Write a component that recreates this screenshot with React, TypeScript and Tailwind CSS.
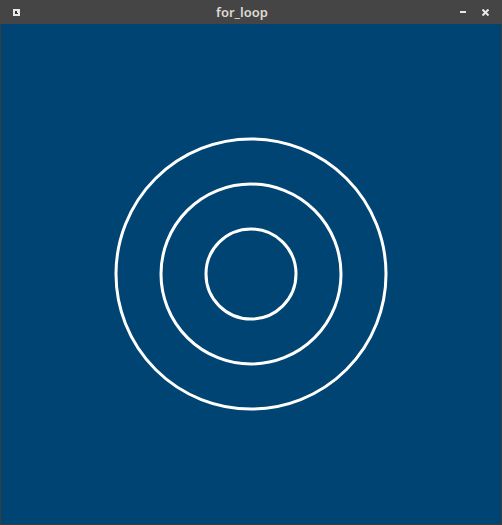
export default function App() {
  return (
    <div className="w-[502px] h-[525px] bg-[#3c3c3c] flex flex-col">
      <div className="h-[24px] bg-[#454545] flex items-center px-[13px] relative">
        <div className="w-[7px] h-[7px] bg-[#e8e8e8] relative">
          <div className="absolute left-[2px] top-[2px] w-[2px] h-[3px] bg-[#333]" />
          <div className="absolute left-[2px] top-[4px] w-[3px] h-[1px] bg-[#333]" />
        </div>
        <div className="flex-1 text-center text-[#dfdbd2] text-[13px] font-semibold font-['Noto_Sans',sans-serif] pl-[4px] leading-none">
          for_loop
        </div>
        <div className="flex items-center gap-[16px]">
          <div className="w-[6px] h-[2px] bg-[#e8e8e8]" />
          <svg width="7" height="7" viewBox="0 0 7 7">
            <path d="M0.5 0.5 L6.5 6.5 M6.5 0.5 L0.5 6.5" stroke="#e8e8e8" strokeWidth="2" />
          </svg>
        </div>
      </div>
      <div className="flex-1 px-[1px] pb-[1px]">
        <div className="w-[500px] h-[500px] bg-[#004474] flex items-center justify-center">
          <svg width="500" height="500" viewBox="0 0 500 500">
            <circle cx="250" cy="250" r="135" fill="none" stroke="#fff" strokeWidth="3" />
            <circle cx="250" cy="250" r="90" fill="none" stroke="#fff" strokeWidth="3" />
            <circle cx="250" cy="250" r="45" fill="none" stroke="#fff" strokeWidth="3" />
          </svg>
        </div>
      </div>
    </div>
  );
}
